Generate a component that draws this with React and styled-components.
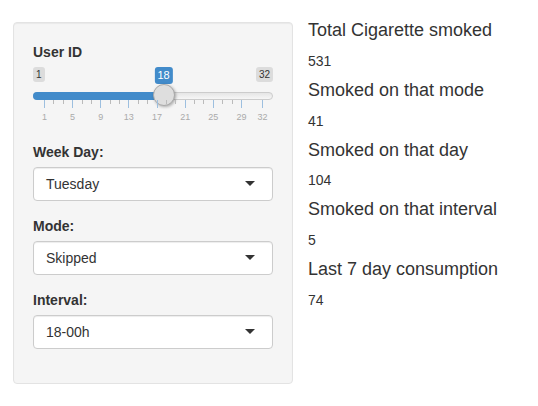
import styled, { createGlobalStyle } from "styled-components"

const GlobalStyle = createGlobalStyle`
body{
  margin: 0;
  background: #fff;
  font-family: "Liberation Sans", Arial, Helvetica, sans-serif;
  font-size: 14px;
  color: #333;
}
`

const Page = styled.div`
display: flex;
align-items: flex-start;
column-gap: 15px;
padding: 11px 0 0 13px;
`

const Sidebar = styled.form`
box-sizing: border-box;
width: 280px;
margin-top: 11px;
padding: 19px 19px 4px;
background-color: #f5f5f5;
border: 1px solid #e3e3e3;
border-radius: 4px;
box-shadow: inset 0 1px 1px rgba(0,0,0,.05);
`

const FormGroup = styled.div`
margin-bottom: 15px;
&:last-child{
  margin-bottom: 30px;
}
`

const Label = styled.label`
display: block;
margin-bottom: 5px;
font-weight: bold;
line-height: 20px;
`

const SelectBox = styled.div`
position: relative;
box-sizing: border-box;
height: 34px;
padding: 6px 12px;
background: #fff;
border: 1px solid #ccc;
border-radius: 4px;
line-height: 20px;
box-shadow: inset 0 1px 1px rgba(0,0,0,.075);
&::after{
  content: "";
  position: absolute;
  right: 17px;
  top: 50%;
  margin-top: -3px;
  border-style: solid;
  border-width: 5px 5px 0 5px;
  border-color: #333 transparent transparent transparent;
}
`

/* ion range slider, shiny skin */
const SliderBox = styled.div`
position: relative;
height: 60px;
`

const Limits = styled.div`
display: flex;
justify-content: space-between;
`

const Badge = styled.span`
padding: 1px 3px;
border-radius: 3px;
font-size: 10px;
line-height: 1.333;
color: #333;
background: rgba(0,0,0,.1);
`

const ValueBadge = styled(Badge)`
position: absolute;
top: 0;
font-size: 11px;
color: #fff;
background: #428bca;
transform: translateX(-50%);
`

const Line = styled.div`
position: absolute;
top: 25px;
left: 0;
right: 0;
box-sizing: border-box;
height: 8px;
border: 1px solid #ccc;
border-radius: 16px;
background: linear-gradient(to bottom, #ddd -50%, #fff 150%);
`

const Bar = styled.div`
position: absolute;
top: 25px;
left: 0;
height: 8px;
background: #428bca;
border-radius: 16px 0 0 16px;
`

const Thumb = styled.div`
position: absolute;
top: 17px;
box-sizing: border-box;
width: 22px;
height: 22px;
margin-left: -11px;
border: 1px solid #aaa;
border-radius: 27px;
background: #dedede;
box-shadow: 1px 1px 3px rgba(0,0,0,.3);
`

const Grid = styled.div`
position: absolute;
top: 33px;
left: 0;
right: 0;
height: 27px;
`

const Tick = styled.span`
position: absolute;
top: 0;
width: 1px;
height: ${p => p.$small ? 4 : 8}px;
background: ${p => p.$small ? "#bbb" : "#9dbfdf"};
`

const TickText = styled.span`
position: absolute;
top: 11px;
font-size: 9px;
line-height: 12px;
color: #aaa;
transform: translateX(-50%);
`

const Main = styled.div`
flex: 1;
`

const StatTitle = styled.h4`
margin: 10px 0;
font-size: 18px;
font-weight: 500;
line-height: 1.1;
`

const StatValue = styled.div`
line-height: 20px;
`

const MIN = 1, MAX = 32, VALUE = 18
const WIDTH = 240, HALF = 11
const pos = v => HALF + (v - MIN) / (MAX - MIN) * (WIDTH - 2 * HALF)

const Slider = () => {
  const labels = [1, 5, 9, 13, 17, 21, 25, 29, 32]
  const small = []
  labels.forEach((v, i) => {
    const next = labels[i + 1]
    if (next && next - v === 4) small.push(v + 4 / 3, v + 8 / 3)
  })
  return (
    <SliderBox>
      <Limits>
        <Badge>{MIN}</Badge>
        <Badge>{MAX}</Badge>
      </Limits>
      <Line />
      <Bar style={{ width: pos(VALUE) }} />
      <ValueBadge style={{ left: pos(VALUE) }}>{VALUE}</ValueBadge>
      <Thumb style={{ left: pos(VALUE) }} />
      <Grid>
        {small.map(v => <Tick key={"s" + v} $small style={{ left: Math.round(pos(v)) }} />)}
        {labels.map(v => <Tick key={v} style={{ left: Math.round(pos(v)) }} />)}
        {labels.map(v => <TickText key={"t" + v} style={{ left: pos(v) + 0.5 }}>{v}</TickText>)}
      </Grid>
    </SliderBox>
  )
}

const selects = [
  { label: "Week Day:", value: "Tuesday" },
  { label: "Mode:", value: "Skipped" },
  { label: "Interval:", value: "18-00h" },
]

const stats = [
  { title: "Total Cigarette smoked", value: 531 },
  { title: "Smoked on that mode", value: 41 },
  { title: "Smoked on that day", value: 104 },
  { title: "Smoked on that interval", value: 5 },
  { title: "Last 7 day consumption", value: 74 },
]

export default function App() {
  return (
    <>
      <GlobalStyle />
      <Page>
        <Sidebar>
          <FormGroup>
            <Label>User ID</Label>
            <Slider />
          </FormGroup>
          {selects.map(s => (
            <FormGroup key={s.label}>
              <Label>{s.label}</Label>
              <SelectBox>{s.value}</SelectBox>
            </FormGroup>
          ))}
        </Sidebar>
        <Main>
          {stats.map(s => (
            <div key={s.title}>
              <StatTitle>{s.title}</StatTitle>
              <StatValue>{s.value}</StatValue>
            </div>
          ))}
        </Main>
      </Page>
    </>
  )
}
